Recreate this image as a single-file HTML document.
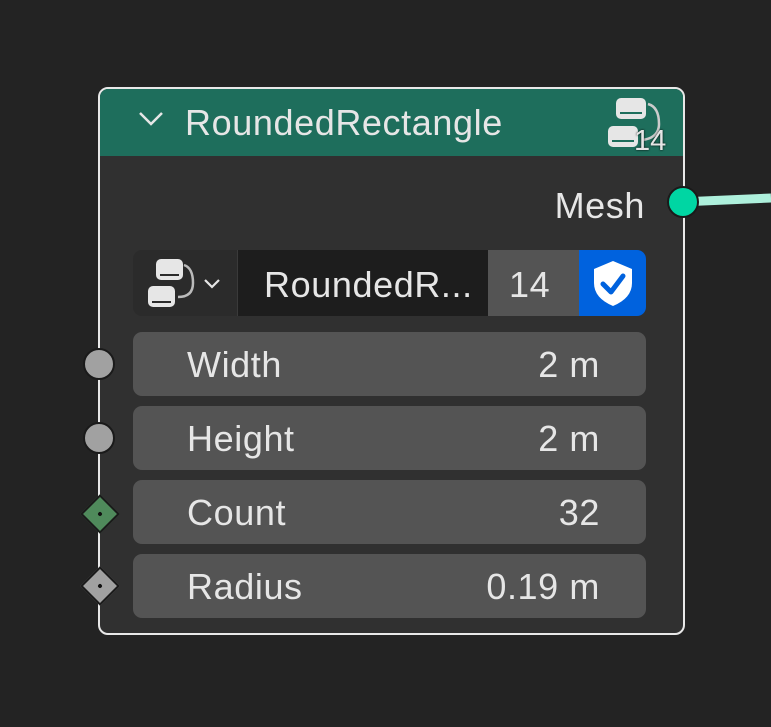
<!DOCTYPE html>
<html><head><style>
body{margin:0;width:771px;height:727px;background:#232323;overflow:hidden;font-family:"Liberation Sans",sans-serif;position:relative}
.a{position:absolute}
.node{left:98px;top:87px;width:583px;height:544px;border:2px solid #e8e8e8;border-radius:10px;background:#303030;overflow:hidden}
.hdr{left:0;top:0;width:583px;height:67px;background:#1e6e5c}
.t{color:#e6e6e6;font-size:36px;letter-spacing:0.6px;white-space:nowrap}
.r{right:171px;text-align:right}
.f{left:133px;width:513px;height:64px;background:#545454;border-radius:9px}
.sock{width:32px;height:32px;border-radius:50%;background:#a1a1a1;border:2px solid #1a1a1a;left:83px;box-sizing:border-box}
.dia{width:24px;height:24px;transform:rotate(45deg);border:2px solid #1a1a1a;left:86px}
.dot{position:absolute;left:10px;top:10px;width:4px;height:4px;border-radius:50%;background:#111}
</style></head><body>
<svg class="a" style="left:680px;top:190px" width="91" height="20"><path d="M0 12 L91 8" stroke="#aef0dc" stroke-width="9"/></svg>
<div class="a node">
 <div class="a hdr"></div>
</div>
<svg class="a" style="left:138px;top:110px" width="30" height="20"><path d="M2 3 L13 14 L24 3" fill="none" stroke="#e6e6e6" stroke-width="2.5"/></svg>
<div class="a t" style="left:185px;top:102px">RoundedRectangle</div>
<svg class="a" style="left:606px;top:96px" width="60" height="58"><rect x="10" y="2" width="30" height="21" rx="5" fill="#e6e6e6"/><rect x="2" y="30" width="30" height="21" rx="5" fill="#e6e6e6"/><path d="M14 17h22M6 45h22" stroke="#1e6e5c" stroke-width="2"/><path d="M42 8 q11 3 11 20 q0 14 -17 16" fill="none" stroke="#ccc" stroke-width="2.5"/></svg>
<div class="a t" style="left:634px;top:125px;font-size:29px;letter-spacing:0;text-shadow:0 0 2px #000">14</div>
<div class="a t r" style="right:126px;top:185px">Mesh</div>
<div class="a" style="left:667px;top:186px;width:32px;height:32px;border-radius:50%;background:#00d6a3;border:2px solid #1a1a1a;box-sizing:border-box"></div>
<div class="a" style="left:133px;top:250px;width:513px;height:66px;border-radius:9px;overflow:hidden;background:#2b2b2b">
 <div class="a" style="left:104px;top:0;width:251px;height:66px;background:#1d1d1d;border-left:1px solid #3a3a3a"></div>
 <div class="a" style="left:355px;top:0;width:91px;height:66px;background:#545454"></div>
 <div class="a" style="left:446px;top:0;width:67px;height:66px;background:#0062de"></div>
</div>
<svg class="a" style="left:146px;top:257px" width="85" height="54"><rect x="10" y="2" width="27" height="21" rx="5" fill="#e6e6e6"/><rect x="2" y="29" width="27" height="21" rx="5" fill="#e6e6e6"/><path d="M14 18h19M6 45h19" stroke="#2b2b2b" stroke-width="2"/><path d="M38 8 q9 3 9 18 q0 14 -15 14" fill="none" stroke="#bbb" stroke-width="2.5"/><path d="M59 23 l7 7 l7 -7" fill="none" stroke="#e6e6e6" stroke-width="2.2"/></svg>
<div class="a t" style="left:264px;top:264px">RoundedR...</div>
<div class="a t" style="left:509px;top:264px">14</div>
<svg class="a" style="left:590px;top:258px" width="46" height="52"><path d="M23 3 L42 11 V25 Q42 40 23 48 Q4 40 4 25 V11 Z" fill="#fff"/><path d="M13 26 L21 34 L33 18" fill="none" stroke="#0062de" stroke-width="5" stroke-linecap="round" stroke-linejoin="round"/></svg>
<div class="a f" style="top:332px"></div><div class="a t" style="left:187px;top:344px">Width</div><div class="a t r" style="top:344px">2 m</div>
<div class="a f" style="top:406px"></div><div class="a t" style="left:187px;top:418px">Height</div><div class="a t r" style="top:418px">2 m</div>
<div class="a f" style="top:480px"></div><div class="a t" style="left:187px;top:492px">Count</div><div class="a t r" style="top:492px">32</div>
<div class="a f" style="top:554px"></div><div class="a t" style="left:187px;top:566px">Radius</div><div class="a t r" style="top:566px">0.19 m</div>
<div class="a sock" style="top:348px"></div>
<div class="a sock" style="top:422px"></div>
<div class="a dia" style="top:500px;background:#4f8a5b"><div class="dot"></div></div>
<div class="a dia" style="top:572px;background:#a1a1a1"><div class="dot"></div></div>
</body></html>
